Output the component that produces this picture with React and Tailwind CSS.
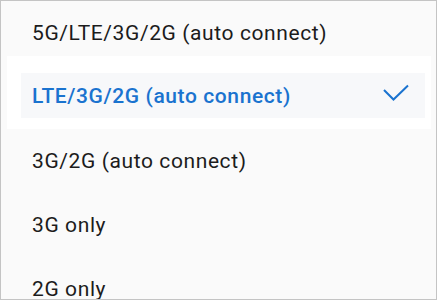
export default function App() {
  const font = { fontFamily: 'Roboto, "Liberation Sans", sans-serif' };
  return (
    <div
      className="w-[437px] h-[300px] overflow-hidden border border-[#c4c4c4] bg-[#fafafa] text-[21px] tracking-[0.6px] text-[#1c1c1c]"
      style={font}
    >
      <div className="h-[55px] pt-[20px] pl-[31px] leading-[24px]">5G/LTE/3G/2G (auto connect)</div>
      <div className="h-[73px] ml-[6px] mr-[5px] bg-white pt-[17px] pl-[14px] pr-[6px]">
        <div className="h-[45px] flex items-center justify-between bg-[#f7f8fa] pl-[11px] pr-[15px] text-[#1a73cf] font-medium">
          <span className="leading-[24px]">LTE/3G/2G (auto connect)</span>
          <svg width="28" height="18" viewBox="0 0 28 18" className="mt-[-6px]">
            <polyline points="2,6 11.5,15.5 26,1.5" fill="none" stroke="#1a73cf" strokeWidth="2" />
          </svg>
        </div>
      </div>
      <div className="h-16 pl-[31px] leading-[64px]">3G/2G (auto connect)</div>
      <div className="h-16 pl-[31px] leading-[64px]">3G only</div>
      <div className="h-16 pl-[31px] leading-[64px]">2G only</div>
    </div>
  );
}
